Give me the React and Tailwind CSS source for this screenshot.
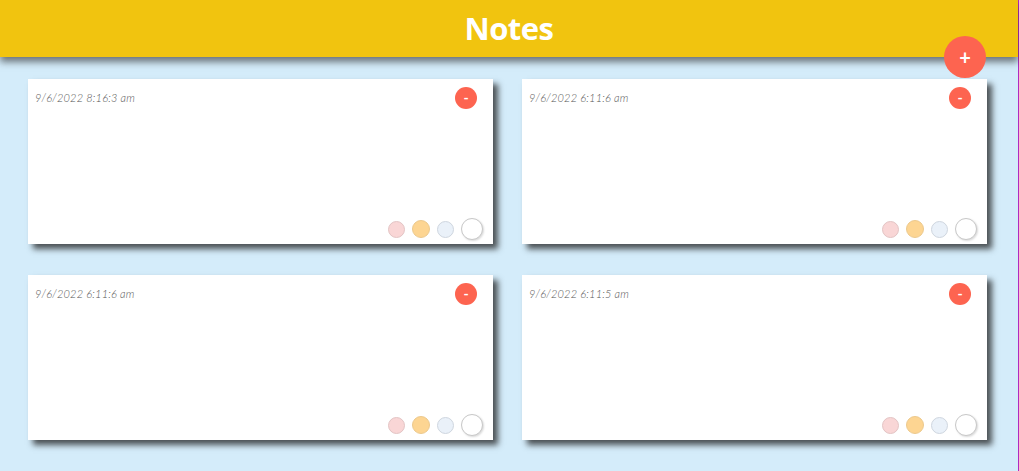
import React from 'react'

const notes = [
  { id: 1, date: '9/6/2022 8:16:3 am' },
  { id: 2, date: '9/6/2022 6:11:6 am' },
  { id: 3, date: '9/6/2022 6:11:6 am' },
  { id: 4, date: '9/6/2022 6:11:5 am' },
]

const Note = ({ date }) => {
  return (
    <div className="relative h-[165px] bg-white shadow-[5px_5px_6px_rgba(30,30,30,0.75)]">
      <p className="pl-[7px] pt-[11px] text-[11px] font-light italic tracking-[0.2px] text-[#555] font-['Lato',sans-serif]">{date}</p>
      <button className="absolute right-[16px] top-[8px] flex h-[22px] w-[22px] items-center justify-center rounded-full bg-[#fd6450] text-[14px] font-bold leading-none text-white font-['Lato',sans-serif]">
        -
      </button>
      <div className="absolute bottom-[4px] right-[10px] flex items-center gap-[7px]">
        <span className="h-[17px] w-[17px] rounded-full border border-[#e3c4c4] bg-[#f9d6d6]"></span>
        <span className="h-[18px] w-[18px] rounded-full border border-[#ecc98d] bg-[#fdd592]"></span>
        <span className="h-[17px] w-[17px] rounded-full border border-[#cfd6df] bg-[#eaf1f9]"></span>
        <span className="h-[22px] w-[22px] rounded-full border border-[#c8c8c8] bg-white shadow-[1px_1px_2px_rgba(0,0,0,0.15)]"></span>
      </div>
    </div>
  )
}

const App = () => {
  return (
    <div className="relative min-h-[471px] w-full border-r border-[#b02bc0] bg-[#d4ecfa] font-['Lato',sans-serif]">
      <header className="relative z-10 flex h-[57px] items-center justify-center bg-[#f1c40f] shadow-[0_5px_7px_rgba(40,40,40,0.6)]">
        <h1 className="text-[31px] font-bold text-white font-['Open_Sans',sans-serif] tracking-[-0.5px]">Notes</h1>
      </header>
      <button className="absolute left-[944px] top-[36px] z-20 flex h-[42px] w-[42px] items-center justify-center rounded-full bg-[#fd6450] text-[20px] font-bold leading-none text-white">
        +
      </button>
      <main className="grid grid-cols-2 gap-x-[29px] gap-y-[31px] pl-[28px] pr-[31px] pt-[22px]">
        {notes.map((n) => (
          <Note key={n.id} date={n.date} />
        ))}
      </main>
    </div>
  )
}

export default App
